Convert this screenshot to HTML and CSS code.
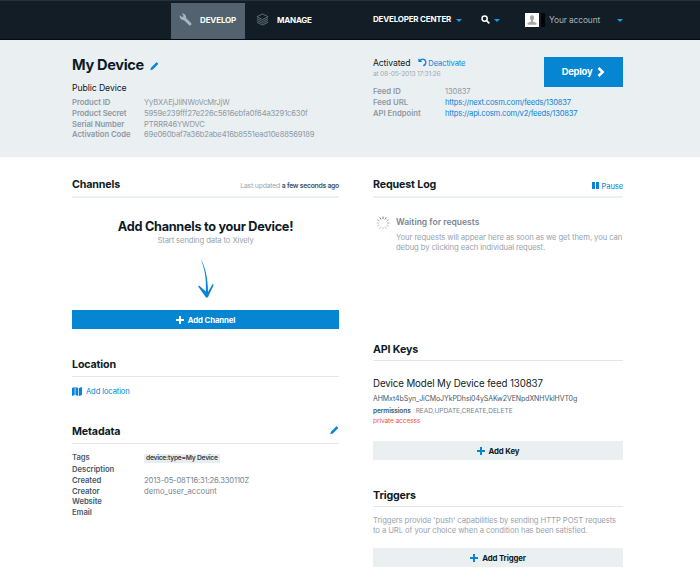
FILE: index.html
```html
<!DOCTYPE html>
<html lang="en">
<head>
<meta charset="utf-8">
<title>My Device</title>
<link rel="stylesheet" href="styles.css">
</head>
<body>
<header class="topbar">
  <nav class="tabs">
    <a class="tab tab-active"><svg class="ico-wrench" viewBox="0 0 14 14"><path d="M1.1 2.3 3.5 4.5 5.1 3.1 3.2.7A4 4 0 0 1 7.6 5.4L13 10.7a1.6 1.6 0 0 1-2.3 2.3L5.4 7.7A4 4 0 0 1 1.1 2.3Z" fill="#a9b4bc"/></svg><span class="nav-text">DEVELOP</span></a>
    <a class="tab"><svg class="ico-layers" viewBox="0 0 14 14" fill="none" stroke="#61717b" stroke-width="1"><path d="M7 1 13 4 7 7 1 4ZM1 6 7 9 13 6M1 8 7 11 13 8M1 10 7 13 13 10"/></svg><span class="nav-text">MANAGE</span></a>
  </nav>
  <div class="nav-right">
    <span class="nav-text">DEVELOPER CENTER</span><i class="caret caret-dev"></i>
    <svg class="ico-search" viewBox="0 0 9 9" fill="none" stroke="#fff"><circle cx="3.6" cy="3.6" r="2.6" stroke-width="1.5"/><path d="M5.6 5.6 8.3 8.3" stroke-width="1.7"/></svg><i class="caret caret-search"></i>
    <span class="avatar"><svg viewBox="0 0 12 12"><path d="M6 1.2C4.2 1.2 3.7 2.6 4 4.3c.2 1.2.7 1.8 1 2.2v1L1.5 9v1.7h9V9L7 7.5v-1c.3-.4.8-1 1-2.2.3-1.7-.2-3.1-2-3.1Z" fill="#a8a8a8"/></svg></span><b class="divider"></b>
    <span class="account">Your account</span><i class="caret caret-account"></i>
  </div>
</header>

<section class="hero">
  <div class="col-left">
    <div class="title-row"><h1>My Device</h1><svg class="pencil" viewBox="0 0 9 9"><path d="M.3 8.7 1 6 6.6.5Q7 .1 7.5.5L8.5 1.5Q8.9 2 8.5 2.4L3 8Z" fill="#0a84d6"/></svg></div>
    <p class="device-type">Public Device</p>
    <dl class="facts">
      <dt>Product ID</dt><dd>YyBXAEjJliNWoVcMrJjW</dd>
      <dt>Product Secret</dt><dd>5959e239fff27e226c5616ebfa0f64a3291c630f</dd>
      <dt>Serial Number</dt><dd>PTRRR46YWDVC</dd>
      <dt>Activation Code</dt><dd>69e060baf7a36b2abe416b8551ead10e88569189</dd>
    </dl>
  </div>
  <div class="col-right hero-right">
    <div>
      <div class="status"><span class="activated">Activated</span><svg class="undo" viewBox="0 0 9 9" fill="none" stroke="#0a84d6" stroke-width="1.3"><path d="M1 .7V3.3H3.8M1.5 3C4-.3 8 1.2 7.8 4.6 7.7 6.3 6.6 7.3 5.2 7.6"/></svg><a class="link deactivate">Deactivate</a></div>
      <p class="since">at 08-05-2013 17:31:26</p>
      <dl class="facts">
        <dt>Feed ID</dt><dd>130837</dd>
        <dt>Feed URL</dt><dd class="link">https://next.cosm.com/feeds/130837</dd>
        <dt>API Endpoint</dt><dd class="link">https://api.cosm.com/v2/feeds/130837</dd>
      </dl>
    </div>
    <button class="deploy"><span>Deploy</span><svg viewBox="0 0 8 10" fill="none" stroke="#fff" stroke-width="2.5"><path d="M1.5 1 5.7 5 1.5 9"/></svg></button>
  </div>
</section>

<main class="content">
  <div class="col-left">
    <section class="channels">
      <div class="head thick"><h2>Channels</h2><p class="updated">Last updated <b>a few seconds ago</b></p></div>
      <h3>Add Channels to your Device!</h3>
      <p class="sub">Start sending data to Xively</p>
      <svg class="arrow" viewBox="0 0 16 40"><path d="M2.5.5C7 8 10 20 10 34L14.600 26 15.800 26.800 9.800 39.500 8 39.500.2 28.500 1 27.500 7.800 33.500C8.500 20 6.500 10 2.500.5Z" fill="#0a84d6"/></svg>
      <button class="bar primary"><svg viewBox="0 0 8 8"><path d="M3 0H5V3H8V5H5V8H3V5H0V3H3Z" fill="#fff"/></svg><span>Add Channel</span></button>
    </section>
    <section class="location">
      <div class="head"><h2>Location</h2></div>
      <div class="add-location"><svg viewBox="0 0 10 9"><path d="M0 1 2.700 0V8L0 9ZM3.400 0 6.300 1V9L3.400 8ZM7 1 10 0V8L7 9Z" fill="#0a84d6"/></svg><a class="link">Add location</a></div>
    </section>
    <section class="metadata">
      <div class="head"><h2>Metadata</h2><svg class="pencil" viewBox="0 0 9 9"><path d="M.3 8.700 1 6 6.600.5Q7 .1 7.500.5L8.500 1.500Q8.900 2 8.500 2.400L3 8Z" fill="#0a84d6"/></svg></div>
      <dl class="facts dark">
        <dt class="tags">Tags</dt><dd class="tags"><span class="tag">device:type=My Device</span></dd>
        <dt>Description</dt><dd></dd>
        <dt>Created</dt><dd>2013-05-08T16:31:26.330110Z</dd>
        <dt>Creator</dt><dd class="creator">demo_user_account</dd>
        <dt>Website</dt><dd></dd>
        <dt>Email</dt><dd></dd>
      </dl>
    </section>
  </div>
  <div class="col-right">
    <section class="log">
      <div class="head thick"><h2>Request Log</h2><span class="pause"><i></i><i></i><a class="link">Pause</a></span></div>
      <div class="waiting">
        <svg class="spinner" viewBox="-7 -7 14 14" stroke="#71808b" stroke-width="1"><path d="M0-4V-6.500M2-3.500 3.300-5.700M-2-3.500-3.300-5.700"/><path opacity=".65" d="M3.500-2 5.700-3.300M-3.500-2-5.700-3.300M4 0H6.500"/><path opacity=".4" d="M-4 0H-6.500M3.500 2 5.700 3.300M-3.500 2-5.700 3.300M2 3.500 3.300 5.700M0 4V6.500M-2 3.500-3.300 5.700"/></svg>
        <div><h4>Waiting for requests</h4>
        <p class="log-text">Your requests will appear here as soon as we get them, you can<br>debug by clicking each individual request.</p></div>
      </div>
    </section>
    <section class="keys">
      <div class="head"><h2>API Keys</h2></div>
      <p class="key-name">Device Model My Device feed 130837</p>
      <p class="key">AHMxt4bSyn_JiCMoJYkPDhsi04ySAKw2VENpdXNHVklHVT0g</p>
      <p class="perms"><b>permissions</b><span>READ,UPDATE,CREATE,DELETE</span></p>
      <p class="private">private accesss</p>
      <button class="bar secondary"><svg viewBox="0 0 8 8"><path d="M3 0H5V3H8V5H5V8H3V5H0V3H3Z" fill="#0a84d6"/></svg><span>Add Key</span></button>
    </section>
    <section class="triggers">
      <div class="head"><h2>Triggers</h2></div>
      <p class="trigger-text">Triggers provide 'push' capabilities by sending HTTP POST requests<br>to a URL of your choice when a condition has been satisfied.</p>
      <button class="bar secondary"><svg viewBox="0 0 8 8"><path d="M3 0H5V3H8V5H5V8H3V5H0V3H3Z" fill="#0a84d6"/></svg><span>Add Trigger</span></button>
    </section>
  </div>
</main>
</body>
</html>
```
FILE: styles.css
```css
* { box-sizing: border-box; }
body { margin: 0; width: 700px; height: 584px; overflow: hidden; background: #fff; color: #0e1b25; font: 8px/11px Inter, "Liberation Sans", sans-serif; }
h1, h2, h3, h4, p, dl, dt, dd { margin: 0; }
svg { display: block; flex: none; overflow: visible; }
button { border: 0; border-radius: 0; padding: 0; font-family: inherit; display: flex; align-items: center; justify-content: center; }
.link { color: #0a84d6; }
a.link { font-size: 7.6px; letter-spacing: -.12px; }

.topbar { height: 40px; background: #121d25; border-top: 1px solid #26323a; border-bottom: 1px solid #050b10; display: flex; justify-content: space-between; padding: 0 77px 0 171px; }
.tabs { display: flex; padding-top: 2px; }
.tab { height: 36px; display: flex; align-items: center; padding-left: 8px; }
.tab-active { width: 74px; background: #52636f; margin-right: 3px; }
.tab svg { width: 13px; height: 13px; margin: -3px 8px 0 0; }
.nav-text { font-size: 8px; font-weight: 700; letter-spacing: -.21px; color: #fff; white-space: nowrap; margin-top: -1px; }
.tab-active .nav-text { letter-spacing: -.14px; }
.nav-right { width: 250px; display: flex; align-items: center; }
.caret { border: 3px solid transparent; border-top-color: #159cec; border-bottom: 0; }
.caret-dev { margin: 1px 19px 0 5px; }
.ico-search { width: 9px; height: 9px; margin-top: -2px; }
.caret-search { margin: 1px 25px 0 4px; }
.avatar { width: 14px; height: 14px; background: #fff; padding: 1px; }
.divider { width: 4px; height: 14px; background: #030608; margin: 0 4px 0 2px; }
.account { font-size: 8.4px; letter-spacing: -.12px; color: #aab2b7; white-space: nowrap; }
.caret-account { margin-left: auto; margin-top: 1px; }

.hero { height: 117px; background: #eaeff2; padding: 15px 77px 0 72px; display: flex; justify-content: space-between; }
.col-left { width: 267px; }
.col-right { width: 250px; }
.title-row { display: flex; align-items: center; height: 20px; }
h1 { font-size: 14.6px; letter-spacing: -.33px; line-height: 20px; font-weight: 700; }
.pencil { width: 8.5px; height: 8.5px; }
.title-row .pencil { margin: 2px 0 0 6px; }
.device-type { font-size: 8.7px; letter-spacing: -.1px; line-height: 12px; margin-top: 7px; }
.facts { display: grid; grid-template-columns: 72px 1fr; grid-auto-rows: 10.8px; line-height: 10.8px; margin-top: 4px; color: #8c99a3; white-space: nowrap; }
.facts dt { font-size: 7.7px; letter-spacing: -.06px; font-weight: 600; }
.facts dd { font-size: 7.6px; letter-spacing: -.14px; }
.facts dd.link { letter-spacing: -.19px; }
.hero-right { display: flex; justify-content: space-between; }
.hero-right > div { width: 170px; }
.hero-right .facts dt { letter-spacing: 0; }
.status { display: flex; align-items: center; height: 12px; margin-top: 2px; }
.activated { font-size: 8.6px; letter-spacing: -.11px; }
.undo { width: 9px; height: 9px; margin: -1px 1px 0 8px; }
.since { font-size: 6.7px; letter-spacing: -.24px; line-height: 10px; color: #a0abb3; }
.hero-right .facts { margin-top: 8px; }
.deploy { width: 79px; height: 30px; margin-top: 2px; background: #0585d2; color: #fff; font-size: 9.4px; letter-spacing: -.22px; font-weight: 700; gap: 5px; }
.deploy svg { width: 8px; height: 10px; margin-top: -1px; }
.deploy span { margin-top: -1px; }

.content { display: flex; justify-content: space-between; padding: 17px 77px 0 72px; }
.head { height: 22px; display: flex; justify-content: space-between; border-bottom: 1px solid #e4e8eb; }
.head.thick { height: 24px; border-bottom: 2px solid #eef1f3; }
h2 { font-size: 10.7px; letter-spacing: -.15px; line-height: 22px; font-weight: 700; }
.updated { font-size: 6.8px; letter-spacing: -.17px; line-height: 24px; color: #98a4ad; }
.updated b { color: #44525e; font-weight: 600; letter-spacing: -.25px; }
.channels { height: 180px; }
h3 { font-size: 12.7px; letter-spacing: -.28px; line-height: 16px; font-weight: 700; margin-top: 21px; text-align: center; }
.sub { font-size: 7.7px; letter-spacing: -.13px; text-align: center; color: #98a4ad; margin-top: 0; }
.arrow { width: 16px; height: 40px; margin: 12px 0 0 126px; }
.bar { width: 100%; height: 19px; font-size: 7.8px; letter-spacing: -.14px; font-weight: 700; gap: 4px; }
.bar svg { width: 8px; height: 8px; }
.primary { background: #0585d2; color: #fff; margin-top: 12px; height: 19px; }
.secondary { background: #eaeff2; color: #0e1b25; }
.location { height: 67px; }
.location .head, .metadata .head, .keys .head, .triggers .head { height: 23px; }
.add-location { display: flex; align-items: center; gap: 4px; margin-top: 9px; }
.add-location svg { width: 10px; height: 9px; margin-top: -1px; }
.metadata .pencil { margin: 5px 1px 0 0; }
.dark { margin-top: 7px; grid-template-rows: 14px; }
.dark dt { color: #485965; }
.dark dd { color: #758590; }
.facts .creator { letter-spacing: .05px; }
.dark .tags { line-height: 14px; }
.tag { display: inline-block; height: 9px; line-height: 9px; background: #e8eef0; padding: 0 2px; font-size: 6.7px; letter-spacing: -.24px; font-weight: 600; color: #30414d; }

.pause { display: flex; align-items: center; height: 24px; }
.pause i { width: 3px; height: 7px; background: #0a84d6; margin: -1px 1px 0 0; }
.pause a { margin-left: 2px; }
.log { height: 165px; }
.waiting { display: flex; margin-top: 16px; color: #98a4ad; }
.spinner { width: 14px; height: 14px; margin: 2px 6px 0 3px; }
h4 { font-size: 8.5px; letter-spacing: .02px; line-height: 12px; font-weight: 600; color: #788690; margin-top: 2px; }
.log-text, .trigger-text { font-size: 7.7px; letter-spacing: -.09px; line-height: 10px; white-space: nowrap; }
.log-text { margin-top: 5px; }
.keys { height: 146px; }
.keys .head, .triggers .head { height: 22px; border-color: #e0e6e9; }
.keys h2, .triggers h2 { line-height: 21px; }
.key-name { font-size: 9.7px; letter-spacing: -.1px; line-height: 14px; margin-top: 16px; white-space: nowrap; }
.key { font-size: 7px; letter-spacing: -.08px; line-height: 10px; margin-top: 3px; color: #485965; }
.perms { font-size: 6.6px; letter-spacing: -.12px; line-height: 10px; margin-top: 2px; color: #758590; }
.perms b { color: #485965; font-weight: 600; margin-right: 5px; }
.perms span { letter-spacing: -.06px; }
.private { font-size: 6.7px; letter-spacing: -.15px; line-height: 10px; color: #f6544f; }
.keys .bar { margin-top: 15px; height: 19px; }
.trigger-text { color: #98a4ad; margin-top: 9px; }
.triggers .bar { margin-top: 12px; }
```
